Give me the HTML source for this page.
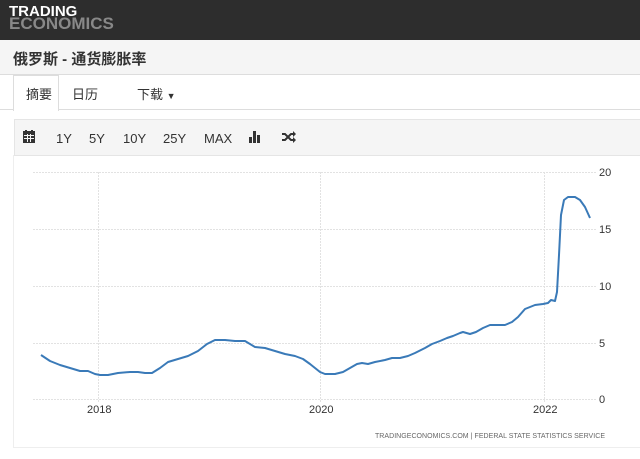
<!DOCTYPE html>
<html><head><meta charset="utf-8"><style>
body{margin:0;width:640px;height:459px;overflow:hidden;background:#fff;font-family:"Liberation Sans","Noto Sans CJK SC",sans-serif;position:relative}
.hdr{position:absolute;left:0;top:0;width:640px;height:40px;background:#2d2d2d}
.logo{position:absolute;left:9px;top:6px;font-weight:bold;font-size:15px;line-height:12px;color:#fff;letter-spacing:0}
.logo span{color:#888;font-size:17px}
.title{position:absolute;left:0;top:40px;width:640px;height:34px;background:#f5f5f5;border-bottom:1px solid #ddd}
.title div{position:absolute;left:13px;top:8px;font-size:15px;font-weight:bold;color:#333}
.tabs{position:absolute;top:75px;left:0;width:640px;height:34px;border-bottom:1px solid #ddd}
.tab{position:absolute;top:9px;font-size:13px;color:#333}
.act{position:absolute;left:13px;top:75px;width:44px;height:35px;background:#fff;border:1px solid #ddd;border-bottom:none}
.tb{position:absolute;left:14px;top:119px;width:630px;height:35px;background:#f5f5f5;border:1px solid #e5e5e5}
.tb span{position:absolute;top:11px;font-size:13px;color:#333}
</style></head><body>
<div class="hdr"><div class="logo">TRADING<br><span>ECONOMICS</span></div></div>
<div class="title"><div>俄罗斯 - 通货膨胀率</div></div>
<div class="tabs"></div>
<div class="act"></div>
<div class="tab" style="left:26px;top:84px">摘要</div>
<div class="tab" style="left:72px;top:84px">日历</div>
<div class="tab" style="left:137px;top:84px">下载 <span style="font-size:9px">▼</span></div>
<div class="tb">
<svg style="position:absolute;left:8px;top:10px" width="12" height="13"><rect x="0" y="1" width="12" height="12" fill="#333"/><rect x="2" y="0" width="2" height="3" fill="#333"/><rect x="8" y="0" width="2" height="3" fill="#333"/><g fill="#f5f5f5"><rect x="1" y="5" width="10" height="1"/><rect x="1" y="8" width="10" height="1"/><rect x="4" y="4" width="1" height="8"/><rect x="7" y="4" width="1" height="8"/></g></svg>
<span style="left:41px">1Y</span><span style="left:74px">5Y</span><span style="left:108px">10Y</span><span style="left:148px">25Y</span><span style="left:189px">MAX</span>
<svg style="position:absolute;left:234px;top:11px" width="13" height="12"><rect x="0" y="6" width="3" height="6" fill="#333"/><rect x="4" y="0" width="3" height="12" fill="#333"/><rect x="8" y="4" width="3" height="8" fill="#333"/></svg>
<svg style="position:absolute;left:267px;top:11px" width="14" height="12"><path d="M0 3h3l6 6h3M0 9h3l6-6h3" stroke="#333" stroke-width="2" fill="none"/><path d="M11 0l3 3-3 3zM11 6l3 3-3 3z" fill="#333"/></svg>
</div>
<div style="position:absolute;left:13px;top:155px;width:1px;height:292px;background:#eee"></div>
<div style="position:absolute;left:13px;top:447px;width:627px;height:1px;background:#eee"></div>
<svg style="position:absolute;left:0;top:0" width="640" height="459">
<g stroke="#e2e2e2" stroke-dasharray="2,1" stroke-width="1">
<line x1="33" y1="172.5" x2="597" y2="172.5"/><line x1="33" y1="229.5" x2="597" y2="229.5"/><line x1="33" y1="286.5" x2="597" y2="286.5"/><line x1="33" y1="343.5" x2="597" y2="343.5"/><line x1="33" y1="399.5" x2="597" y2="399.5"/>
<line x1="98.5" y1="172" x2="98.5" y2="402"/><line x1="320.5" y1="172" x2="320.5" y2="402"/><line x1="544.5" y1="172" x2="544.5" y2="402"/>
</g>
<g font-family="Liberation Sans" font-size="11" fill="#333">
<text x="599" y="176">20</text><text x="599" y="233">15</text><text x="599" y="290">10</text><text x="599" y="347">5</text><text x="599" y="403">0</text>
<text x="87" y="413">2018</text><text x="309" y="413">2020</text><text x="533" y="413">2022</text>
</g>
<text x="375" y="438" font-family="Liberation Sans" font-size="7" fill="#666" textLength="230" lengthAdjust="spacing">TRADINGECONOMICS.COM  |  FEDERAL STATE STATISTICS SERVICE</text>
<polyline fill="none" stroke="#3a7ab8" stroke-width="2" stroke-linejoin="round" points="41,355 50,361 60,365 70,368 80,371 88,371 95,374 100,375 108,375 118,373 130,372 138,372 145,373 152,373 160,368 168,362 178,359 188,356 198,351 207,344 215,340 225,340 235,341 245,341 255,347 265,348 275,351 285,354 295,356 303,359 310,364 320,372 325,374 335,374 343,372 350,368 357,364 362,363 368,364 375,362 385,360 392,358 400,358 408,356 415,353 425,348 432,344 440,341 447,338 453,336 460,333 463,332 470,334 476,332 483,328 490,325 495,325 505,325 512,322 518,317 525,309 535,305 543,304 548,303 551,300 555,301 557,292 559,255 561,215 564,200 568,197 575,197 580,200 585,207 590,218"/>
</svg>
</body></html>
